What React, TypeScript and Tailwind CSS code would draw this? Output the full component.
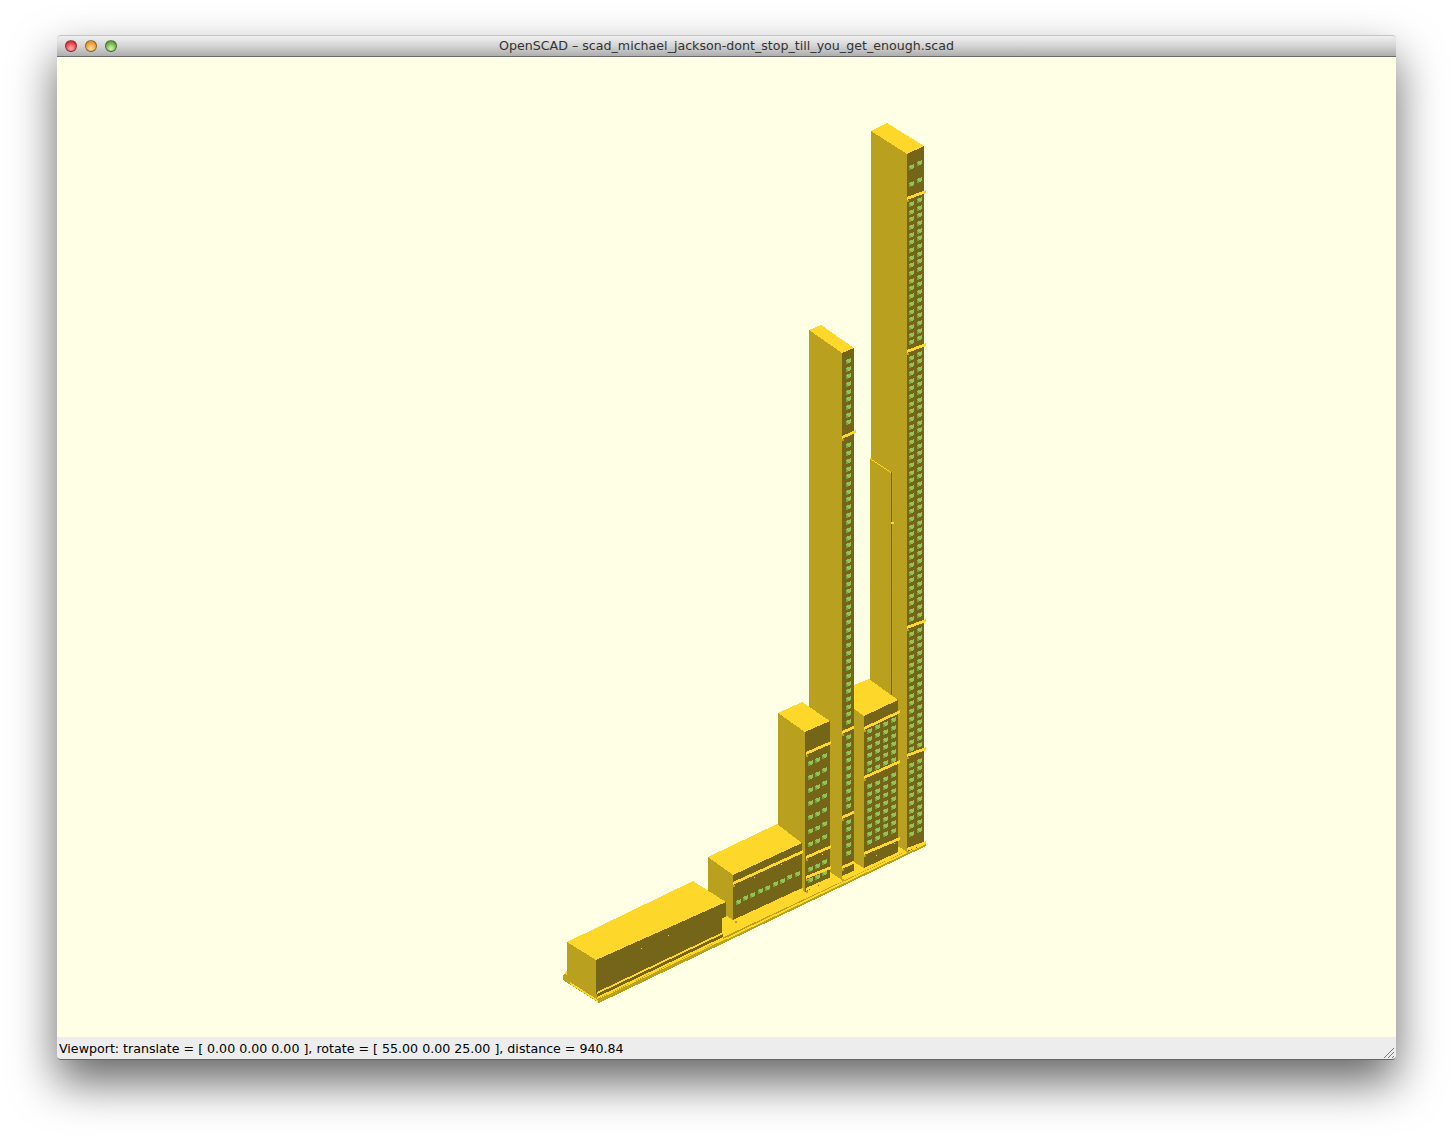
import React from "react";

const BRIGHT = "#fdd82a";
const MID = "#b9a01e";
const DARK = "#756518";
const GREEN = "#93c256";
const GREEN_DARK = "#74a040";

type Pt = [number, number];

const Poly = ({ pts, fill }: { pts: Pt[]; fill: string }) => (
  <polygon points={pts.map((p) => p.join(",")).join(" ")} fill={fill} />
);

// band that runs along the dark face, rising to the right
const Band = ({ x1, y1, x2, y2, h = 3 }: { x1: number; y1: number; x2: number; y2: number; h?: number }) => (
  <>
    <Poly pts={[[x1, y1], [x2, y2], [x2, y2 + h], [x1, y1 + h]]} fill={BRIGHT} />
    <Poly pts={[[x1, y1 + h], [x1 + 2, y1 + h], [x1 + 2, y1 + h + 2], [x1, y1 + h + 2]]} fill={MID} />
  </>
);

const Win = ({ x: rawX, y: rawY, w = 5, h = 4 }: { x: number; y: number; w?: number; h?: number }) => {
  const x = Math.round(rawX);
  const y = Math.round(rawY);
  return (
    <>
      <Poly pts={[[x, y + 2], [x + w, y], [x + w, y + h], [x, y + h + 2]]} fill={GREEN} />
      <Poly pts={[[x, y + 3], [x + 3, y + h + 1], [x, y + h + 2]]} fill={GREEN_DARK} />
    </>
  );
};

const Dot = ({ x, y }: { x: number; y: number }) => <rect x={x} y={y} width={1} height={1} fill={BRIGHT} />;

const range = (from: number, to: number, step: number) => {
  const out: number[] = [];
  for (let v = from; v <= to; v += step) out.push(v);
  return out;
};

const skipBand = (y: number, bands: number[]) => bands.every((b) => y < b - 8 || y > b + 3);

const Tower1 = () => {
  const rows = range(201, 838, 7.68).filter((y) => skipBand(y, [351, 627, 755]));
  return (
    <g>
      <Poly pts={[[871, 131], [887, 123], [924, 146], [907, 154]]} fill={BRIGHT} />
      <Poly pts={[[871, 131], [907, 154], [907, 852], [871, 829]]} fill={MID} />
      <Poly pts={[[907, 154], [924, 146], [924, 844], [907, 852]]} fill={DARK} />
      {[164, 181, ...rows].map((y) => (
        <React.Fragment key={y}>
          <Win x={909} y={y} />
          <Win x={917} y={y - 4} />
        </React.Fragment>
      ))}
      <Band x1={907} y1={197} x2={926} y2={190} />
      <Band x1={907} y1={350} x2={926} y2={343} />
      <Band x1={907} y1={626} x2={926} y2={619} />
      <Band x1={907} y1={754} x2={926} y2={747} />
      <Band x1={907} y1={848} x2={926} y2={841} />
      {/* thin slab in front of the tall face */}
      <Poly pts={[[870, 458], [891, 472], [891, 690], [870, 690]]} fill={MID} />
      <Poly pts={[[870, 458], [891, 472], [891, 473], [870, 459]]} fill={BRIGHT} />
      <Poly pts={[[891, 472], [892, 472], [892, 700], [891, 700]]} fill={DARK} />
      <Poly pts={[[891, 522], [894, 522], [894, 524], [891, 524]]} fill={BRIGHT} />
    </g>
  );
};

const Tower2 = () => {
  const rows = range(358, 860, 7.68).filter((y) => skipBand(y, [434, 730, 815, 865]));
  return (
    <g>
      <Poly pts={[[809, 330], [821, 325], [854, 348], [842, 353]]} fill={BRIGHT} />
      <Poly pts={[[809, 330], [842, 353], [842, 880], [809, 858]]} fill={MID} />
      <Poly pts={[[842, 353], [854, 348], [854, 872], [842, 878]]} fill={DARK} />
      {rows.map((y) => (
        <Win key={y} x={845.5} y={y} />
      ))}
      <Band x1={842} y1={436} x2={856} y2={430} />
      <Band x1={842} y1={731} x2={856} y2={725} />
      <Band x1={842} y1={816} x2={856} y2={810} />
      <Band x1={842} y1={866} x2={856} y2={860} />
      <Band x1={842} y1={876} x2={856} y2={870} />
    </g>
  );
};

const Tower3 = () => {
  const rows = range(728, 840, 7.9).filter((y) => skipBand(y, [777]));
  return (
    <g>
      <Poly pts={[[854, 685], [869, 679], [898, 700], [864, 716], [854, 709]]} fill={BRIGHT} />
      <Poly pts={[[854, 709], [864, 716], [864, 868], [854, 862]]} fill={MID} />
      <Poly pts={[[864, 716], [898, 700], [898, 852], [864, 868]]} fill={DARK} />
      {rows.map((y) =>
        [0, 1, 2, 3].map((c) => <Win key={`${y}-${c}`} x={866.5 + c * 8} y={y - c * 3.6} />),
      )}
      <Band x1={864} y1={727} x2={900} y2={710} />
      <Band x1={864} y1={776} x2={900} y2={760} />
      <Band x1={864} y1={852} x2={900} y2={837} />
      <Dot x={876} y={855} />
      <Dot x={894} y={843} />
    </g>
  );
};

const Tower4 = () => {
  const rows = [760, 774, 787, 800, 814, 828, 841, 866, 877];
  return (
    <g>
      <Poly pts={[[778, 713], [802, 702], [830, 721], [805, 732]]} fill={BRIGHT} />
      <Poly pts={[[778, 713], [805, 732], [805, 892], [778, 875]]} fill={MID} />
      <Poly pts={[[805, 732], [830, 721], [830, 880], [805, 892]]} fill={DARK} />
      {rows.map((y) =>
        [0, 1, 2].map((c) => <Win key={`${y}-${c}`} x={807.5 + c * 7.3} y={y - c * 3.3} />),
      )}
      <Band x1={806} y1={752} x2={831} y2={741} />
      <Band x1={806} y1={856} x2={831} y2={845} />
      <Band x1={806} y1={876} x2={831} y2={866} />
      <Band x1={806} y1={888} x2={831} y2={877} />
      <Dot x={822} y={854} />
    </g>
  );
};

const Block5 = () => (
  <g>
    <Poly pts={[[708, 857], [777, 824], [802, 843], [733, 875]]} fill={BRIGHT} />
    <Poly pts={[[708, 857], [733, 875], [733, 920], [708, 904]]} fill={MID} />
    <Poly pts={[[733, 875], [802, 843], [802, 888], [733, 920]]} fill={DARK} />
    {range(0, 8, 1).map((i) => (
      <Win key={i} x={735.5 + i * 7.4} y={899 - i * 3.55} />
    ))}
    <Band x1={733} y1={882} x2={803} y2={850} />
    <Band x1={735} y1={919} x2={803} y2={888} h={2} />
    <Dot x={754} y={877} />
    <Dot x={781} y={864} />
  </g>
);

const Block6 = () => (
  <g>
    <Poly pts={[[567, 942], [693, 881], [726, 902], [596, 960]]} fill={BRIGHT} />
    <Poly pts={[[567, 942], [596, 960], [596, 994], [567, 975]]} fill={MID} />
    <Poly pts={[[596, 960], [726, 902], [726, 917], [722, 918], [722, 934], [596, 994]]} fill={DARK} />
    <Dot x={668} y={935} />
    <Dot x={641} y={948} />
  </g>
);

const Base = () => (
  <g>
    {/* bright deck behind and between the buildings */}
    <Poly pts={[[722, 917], [900, 835], [926, 842], [600, 999], [596, 990]]} fill={BRIGHT} />
    {/* outer plinth edge */}
    <Poly pts={[[563, 975], [566, 972], [600, 995], [926, 842], [926, 846], [599, 1003], [563, 980]]} fill={MID} />
    <Poly pts={[[926, 842], [600, 998], [600, 1000], [926, 844]]} fill={BRIGHT} />
    {/* plinth steps on the left end */}
    <Poly pts={[[564, 973], [567, 971], [598, 992], [598, 995]]} fill={BRIGHT} />
    <Poly pts={[[570, 982], [598, 1000], [598, 1002], [570, 984]]} fill={BRIGHT} />
  </g>
);

const Plinth6 = () => (
  <g>
    <Poly pts={[[597, 992], [723, 932], [723, 934], [597, 994]]} fill={BRIGHT} />
    <Poly pts={[[597, 994], [723, 934], [723, 937], [597, 997]]} fill={DARK} />
    <Poly pts={[[597, 997], [723, 937], [723, 939], [597, 999]]} fill={BRIGHT} />
    <Poly pts={[[599, 999], [726, 939], [726, 942], [599, 1003]]} fill={MID} />
  </g>
);

const Scene = () => (
  <svg viewBox="57 57 1339 980" shapeRendering="crispEdges" className="block h-full w-full">
    <Base />
    <Tower1 />
    <Tower2 />
    <Tower3 />
    <Tower4 />
    <Block5 />
    <Block6 />
    <Plinth6 />
  </svg>
);

const Light = ({ cls }: { cls: string }) => <div className={`h-3 w-3 rounded-full border border-black/40 ${cls}`} />;

export default function App() {
  return (
    <div className="h-[1138px] w-[1453px] overflow-hidden bg-white pl-[57px] pt-[35px]">
      <div className="flex h-[1025px] w-[1339px] flex-col rounded-[4px] shadow-[0_22px_46px_rgba(0,0,0,0.6)]">
        <div className="flex h-[22px] shrink-0 items-center rounded-t-[4px] border-t border-b border-t-[#c4c4c4] border-b-[#6a6a6a] bg-gradient-to-b from-[#f0f0f0] via-[#d4d4d4] to-[#aeaeae] pl-[8px]">
          <div className="flex w-[60px] gap-2">
            <Light cls="bg-[radial-gradient(circle_at_50%_75%,#ffb0b0,#e4323c_70%)]" />
            <Light cls="bg-[radial-gradient(circle_at_50%_75%,#ffe0a0,#e8942c_70%)]" />
            <Light cls="bg-[radial-gradient(circle_at_50%_75%,#d8f5b0,#62a83e_70%)]" />
          </div>
          <div className="-ml-[68px] flex-1 text-center font-['DejaVu_Sans',sans-serif] text-[12.64px] leading-[20px] text-[#333333]">
            OpenSCAD – scad_michael_jackson-dont_stop_till_you_get_enough.scad
          </div>
        </div>
        <div className="min-h-0 flex-1 bg-[#ffffe5]">
          <Scene />
        </div>
        <div className="flex h-[23px] shrink-0 items-center justify-between rounded-b-[4px] border-b border-[#666666] bg-[#ededed] pl-[2px] pt-[2px] font-['DejaVu_Sans',sans-serif] text-[12.63px] text-black">
          <span>Viewport: translate = [ 0.00 0.00 0.00 ], rotate = [ 55.00 0.00 25.00 ], distance = 940.84</span>
          <svg width="12" height="12" viewBox="0 0 12 12" className="mr-[1px] mt-[7px]">
            <path d="M1 11 L11 1 M5 11 L11 5 M9 11 L11 9" stroke="#777777" strokeWidth="1" fill="none" />
          </svg>
        </div>
      </div>
    </div>
  );
}
